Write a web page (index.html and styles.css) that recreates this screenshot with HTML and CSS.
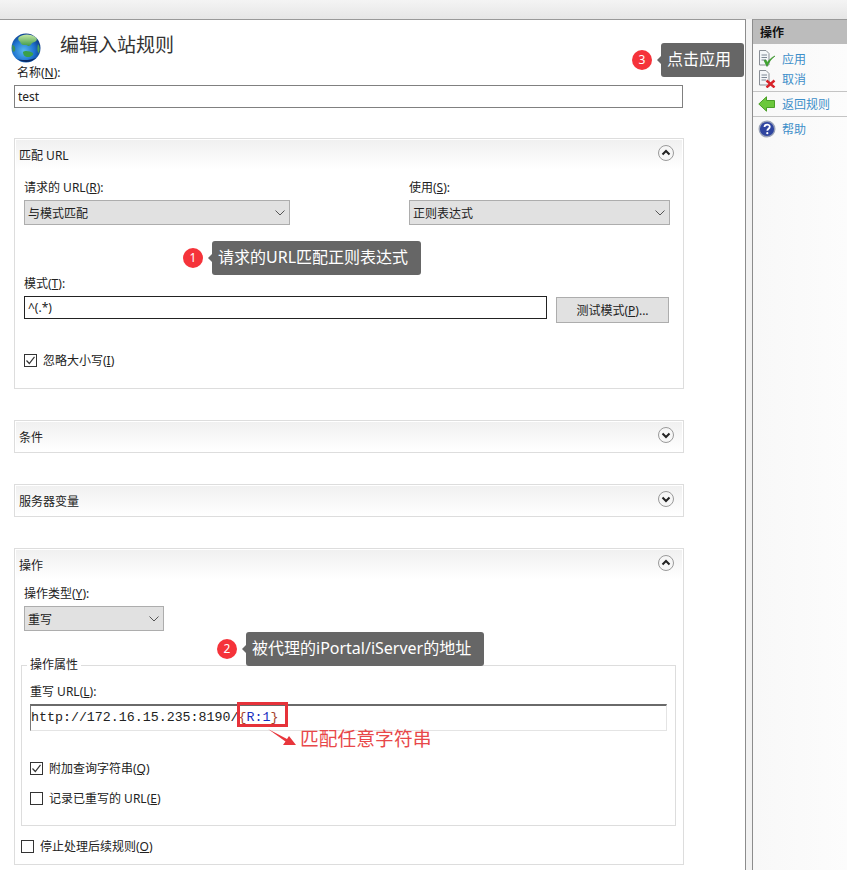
FILE: index.html
```html
<!DOCTYPE html>
<html lang="zh-CN">
<head>
  <meta charset="UTF-8" />
  <title>编辑入站规则</title>
  <link rel="stylesheet" href="styles.css">
</head>
<body>

  <div class="topbar"></div>

  <div class="window">

    <!-- Main form -->
    <div class="main">
      <div class="head">
        <svg class="globe" width="30" height="30" viewBox="0 0 30 30">
          <defs>
            <radialGradient id="sea" cx="0.42" cy="0.6" r="0.62">
              <stop offset="0" stop-color="#58b8f0" />
              <stop offset="0.6" stop-color="#1f74d0" />
              <stop offset="1" stop-color="#0c3a88" />
            </radialGradient>
            <linearGradient id="land" x1="0" y1="0" x2="0" y2="1">
              <stop offset="0" stop-color="#c6e8a4" />
              <stop offset="1" stop-color="#3f9a4c" />
            </linearGradient>
          </defs>
          <circle cx="15" cy="15" r="14.5" fill="url(#sea)" />
          <path d="M8 4C12 .6 20 .4 25 4.500C27 7 25 9 22 9.500C20 10.500 20 13 17 13C15 11 13 13 11 11.500C9 10.500 10 9 8 8C7 6.500 7 5 8 4Z" fill="url(#land)" />
          <path d="M12 19C14 17 19 18 22 20C23 22 20 24 17 24C14 24 12 22 12 19Z" fill="#3aa04a" />
          <path d="M1 12C3 12 5 14 4 18C3 19 2 19 1.500 18Z" fill="#3a8f5a" />
          <path d="M27 11C29 13 29 17 28 20C26 19 26 15 27 11Z" fill="#4ba25a" />
          <path d="M6 26C12 30 20 30 25 25C20 27 12 28 6 26Z" fill="#0a2c68" />
        </svg>
        <h1 class="title">编辑入站规则</h1>
      </div>

      <div class="form">
        <div class="label">名称(<u>N</u>):</div>
        <input class="textbox name-box" value="test" />

        <!-- 匹配 URL -->
        <div class="section first">
          <div class="section-head">
            <span>匹配 URL</span>
            <svg class="toggle" width="18" height="18" viewBox="0 0 18 18"><circle cx="9" cy="9" r="7.500" fill="#f6f6f6" stroke="#9a9a9a" /><path d="M5.500 10.500L9 7l3.500 3.500" fill="none" stroke="#222" stroke-width="2" /></svg>
          </div>
          <div class="section-body">
            <div class="two-col">
              <div class="col-left">
                <div class="label">请求的 URL(<u>R</u>):</div>
                <div class="select">与模式匹配<svg width="10" height="6" viewBox="0 0 10 6"><path d="M.500 .500L5 5l4.500-4.500" fill="none" stroke="#555" /></svg></div>
              </div>
              <div class="col-right">
                <div class="label">使用(<u>S</u>):</div>
                <div class="select">正则表达式<svg width="10" height="6" viewBox="0 0 10 6"><path d="M.500 .500L5 5l4.500-4.500" fill="none" stroke="#555" /></svg></div>
              </div>
            </div>
            <div class="label pattern-label">模式(<u>T</u>):</div>
            <div class="pattern-row">
              <input class="textbox pattern-box" value="^(.*)" />
              <button class="btn">测试模式(<u>P</u>)...</button>
            </div>
            <div class="check ignore-case">
              <span class="box"><svg width="11" height="11" viewBox="0 0 11 11"><path d="M1.500 5.500L4.300 8.500L9.500 1.800" fill="none" stroke="#333" stroke-width="1.200" /></svg></span>
              <span>忽略大小写(<u>I</u>)</span>
            </div>
          </div>
        </div>

        <!-- 条件 -->
        <div class="section collapsed">
          <div class="section-head">
            <span>条件</span>
            <svg class="toggle" width="18" height="18" viewBox="0 0 18 18"><circle cx="9" cy="9" r="7.500" fill="#f6f6f6" stroke="#9a9a9a" /><path d="M5.500 7.500L9 11l3.500-3.500" fill="none" stroke="#222" stroke-width="2" /></svg>
          </div>
        </div>

        <!-- 服务器变量 -->
        <div class="section collapsed">
          <div class="section-head">
            <span>服务器变量</span>
            <svg class="toggle" width="18" height="18" viewBox="0 0 18 18"><circle cx="9" cy="9" r="7.500" fill="#f6f6f6" stroke="#9a9a9a" /><path d="M5.500 7.500L9 11l3.500-3.500" fill="none" stroke="#222" stroke-width="2" /></svg>
          </div>
        </div>

        <!-- 操作 -->
        <div class="section">
          <div class="section-head">
            <span>操作</span>
            <svg class="toggle" width="18" height="18" viewBox="0 0 18 18"><circle cx="9" cy="9" r="7.500" fill="#f6f6f6" stroke="#9a9a9a" /><path d="M5.500 10.500L9 7l3.500 3.500" fill="none" stroke="#222" stroke-width="2" /></svg>
          </div>
          <div class="section-body action-body">
            <div class="label">操作类型(<u>Y</u>):</div>
            <div class="select small">重写<svg width="10" height="6" viewBox="0 0 10 6"><path d="M.500 .500L5 5l4.500-4.500" fill="none" stroke="#555" /></svg></div>

            <fieldset class="props">
              <legend>操作属性</legend>
              <div class="label">重写 URL(<u>L</u>):</div>
              <div class="url-box">http://172.16.15.235:8190/<span class="brace">{</span><span class="token">R:1</span><span class="brace">}</span></div>
              <div class="check append-query">
                <span class="box"><svg width="11" height="11" viewBox="0 0 11 11"><path d="M1.500 5.500L4.300 8.500L9.500 1.800" fill="none" stroke="#333" stroke-width="1.200" /></svg></span>
                <span>附加查询字符串(<u>Q</u>)</span>
              </div>
              <div class="check log-url">
                <span class="box"></span>
                <span>记录已重写的 URL(<u>E</u>)</span>
              </div>
            </fieldset>

            <div class="check stop-rule">
              <span class="box"></span>
              <span>停止处理后续规则(<u>O</u>)</span>
            </div>
          </div>
        </div>
      </div>
    </div>

    <!-- Actions panel -->
    <div class="side">
      <div class="side-head">操作</div>
      <div class="side-group">
        <div class="side-item">
          <svg width="18" height="18" viewBox="0 0 18 18"><path d="M1.500 .500H8L11 3.500V15H1.500Z" fill="#f4f6f8" stroke="#8a8f96" /><path d="M3.500 5H9M3.500 7.500H9M3.500 10H8" stroke="#7d8794" /><path d="M6 10.500L9 16.500C11 12 13 9 17 6C13.500 7.500 11 10 9.300 12.500L8 10Z" fill="#3fa82f" stroke="#2f8a22" stroke-width=".6" /></svg>
          <span>应用</span>
        </div>
        <div class="side-item">
          <svg width="18" height="18" viewBox="0 0 18 18"><path d="M1.500 .500H8L11 3.500V15H1.500Z" fill="#f4f6f8" stroke="#8a8f96" /><path d="M3.500 5H9M3.500 7.500H9M3.500 10H8" stroke="#7d8794" /><path d="M8.500 10.500L16.500 17.500M16.500 10.500L8.500 17.500" stroke="#d8232a" stroke-width="2.400" /></svg>
          <span>取消</span>
        </div>
      </div>
      <div class="side-group">
        <div class="side-item">
          <svg width="18" height="18" viewBox="0 0 18 18"><path d="M.800 9L8.500 1.800V5.500H16.500V12.500H8.500V16.200Z" fill="#6cc83c" stroke="#4a9e28" /></svg>
          <span>返回规则</span>
        </div>
      </div>
      <div class="side-group last">
        <div class="side-item">
          <svg width="18" height="18" viewBox="0 0 18 18"><circle cx="9" cy="9" r="7.800" fill="#2f45a0" stroke="#9aa3b8" stroke-width="1.400" /><path d="M6.500 7C6.500 3.800 11.800 3.800 11.800 6.800C11.800 8.800 9.300 8.800 9.300 10.800" fill="none" stroke="#fff" stroke-width="1.800" /><circle cx="9.300" cy="13.200" r="1.100" fill="#fff" /></svg>
          <span>帮助</span>
        </div>
      </div>
    </div>
  </div>

  <!-- Annotations on top of the screenshot -->
  <div class="note note-1"><span class="dot">1</span><span class="tip">请求的URL匹配正则表达式</span></div>
  <div class="note note-2"><span class="dot">2</span><span class="tip">被代理的iPortal/iServer的地址</span></div>
  <div class="note note-3"><span class="dot">3</span><span class="tip">点击应用</span></div>

  <div class="red-box"></div>
  <svg class="red-arrow" width="30" height="20" viewBox="0 0 30 20"><path d="M0 0L19 10L21 7L28 16L15 16L17.500 12.500Z" fill="#e8363c" /></svg>
  <div class="red-text">匹配任意字符串</div>

</body>
</html>
```

FILE: styles.css
```css
* {
  box-sizing: border-box;
}

body {
  margin: 0;
  width: 847px;
  height: 870px;
  overflow: hidden;
  position: relative;
  background: #f2f2f2;
  color: #222;
  font-family: "Noto Sans", "Noto Sans CJK SC", sans-serif;
  font-size: 12px;
}

.topbar {
  height: 19px;
  background: linear-gradient(to bottom, #f4f4f4, #e6e6e6);
}

.window {
  display: flex;
  height: 851px;
}

.main {
  width: 746px;
  background: #fff;
  border-top: 1px solid #999;
  border-right: 1px solid #8c8c8c;
}

.head {
  display: flex;
  height: 45px;
  padding: 13px 0 0 11px;
}

.globe {
  flex: none;
}

.title {
  margin: -1px 0 0 19px;
  font-size: 19px;
  font-weight: 400;
  line-height: 26px;
  color: #333;
}

.form {
  width: 670px;
  margin-left: 14px;
}

.label {
  height: 16px;
  line-height: 16px;
  white-space: nowrap;
}

.form > .label {
  padding-left: 3px;
}

.textbox {
  display: block;
  margin: 4px 0 0;
  padding: 0 3px;
  height: 23px;
  font: inherit;
  color: #222;
  background: #fff;
  border: 1px solid #808080;
  border-radius: 0;
  outline: none;
}

.name-box {
  width: 669px;
}

.section {
  margin-top: 31px;
  padding: 1px;
  border: 1px solid #ddd;
}

.section.first {
  margin-top: 30px;
}

.section.collapsed {
  height: 33px;
}

.section-head {
  display: flex;
  align-items: center;
  justify-content: space-between;
  height: 30px;
  padding: 0 7px 0 3px;
  background: linear-gradient(to bottom, #f0f0f0, #fff);
}

.toggle {
  margin-top: -5px;
}

.section-body {
  padding: 10px 12px 19px 8px;
}

.two-col {
  display: flex;
  justify-content: space-between;
}

.col-left {
  width: 266px;
}

.col-right {
  width: 261px;
}

.select {
  display: flex;
  align-items: center;
  justify-content: space-between;
  height: 25px;
  margin-top: 4px;
  padding: 0 4px 0 3px;
  background: #e1e1e1;
  border: 1px solid #adadad;
}

.select.small {
  width: 140px;
}

.pattern-label {
  margin-top: 51px;
}

.pattern-row {
  display: flex;
  align-items: flex-start;
  gap: 9px;
  height: 27px;
  margin-top: 4px;
}

.pattern-box {
  width: 523px;
  margin: 0;
  border-color: #222;
}

.btn {
  width: 113px;
  height: 26px;
  margin-top: 1px;
  padding: 0;
  font: inherit;
  color: #222;
  background: #e1e1e1;
  border: 1px solid #adadad;
  border-radius: 0;
}

.check {
  display: flex;
  align-items: center;
  gap: 6px;
  height: 16px;
}

.box {
  display: flex;
  align-items: center;
  justify-content: center;
  flex: none;
  width: 13px;
  height: 13px;
  background: #fff;
  border: 1px solid #333;
}

.ignore-case {
  margin-top: 29px;
}

.section-body.action-body {
  padding: 6px 12px 9px 8px;
}

.props {
  min-width: 0;
  width: 655px;
  margin: 26px 0 0 -3px;
  padding: 11px 8px 19px;
  border: 1px solid #ddd;
}

.props legend {
  height: 16px;
  margin-left: -3px;
  padding: 0 3px;
  line-height: 16px;
}

.url-box {
  width: 637px;
  height: 27px;
  margin-top: 4px;
  padding: 4px 0 0;
  font-family: "Liberation Mono", monospace;
  font-size: 13.300px;
  line-height: 16px;
  color: #222;
  border-top: 2px solid #6a6a6a;
  border-left: 1px solid #777;
  border-right: 1px solid #e4e4e4;
  border-bottom: 1px solid #e4e4e4;
}

.brace {
  color: #a5432e;
}

.token {
  color: #1a2fc0;
}

.append-query {
  margin-top: 29px;
}

.log-url {
  margin-top: 14px;
}

.stop-rule {
  margin-top: 12px;
  margin-left: -3px;
}

/* Right panel */
.side {
  flex: 1;
  margin-left: 6px;
  background: linear-gradient(to right, #f8f8f8, #fcfcfc);
  border-top: 1px solid #999;
  border-left: 1px solid #8c8c8c;
}

.side-head {
  height: 24px;
  padding-left: 7px;
  line-height: 25px;
  font-weight: 700;
  color: #111;
  background: #bcbcbc;
}

.side-group {
  padding: 2px 0 2px 5px;
  border-bottom: 1px solid #c4c4c4;
}

.side-head + .side-group {
  padding-top: 5px;
}

.side-group.last {
  border-bottom: none;
}

.side-item {
  display: flex;
  align-items: center;
  gap: 6px;
  height: 20px;
  color: #3d8fc9;
}

/* Annotations */
.note {
  position: absolute;
  display: flex;
  align-items: center;
  height: 34px;
}

.note-1 {
  left: 183px;
  top: 241px;
}

.note-2 {
  left: 217px;
  top: 632px;
}

.note-3 {
  left: 632px;
  top: 43px;
}

.dot {
  flex: none;
  width: 20px;
  height: 20px;
  margin-right: 9px;
  border-radius: 50%;
  text-align: center;
  line-height: 20px;
  font-size: 12px;
  color: #fff;
  background: #f5333a;
}

.tip {
  position: relative;
  height: 34px;
  padding: 0 13px 0 6px;
  font-size: 16px;
  line-height: 33px;
  white-space: nowrap;
  color: #fff;
  background: #666;
  border-radius: 3px;
}

.tip::before {
  content: "";
  position: absolute;
  left: -4px;
  top: 13px;
  border-top: 4px solid transparent;
  border-bottom: 4px solid transparent;
  border-right: 4px solid #666;
}

.red-box {
  position: absolute;
  left: 237px;
  top: 702px;
  width: 51px;
  height: 25px;
  border: 3px solid #e6323a;
}

.red-arrow {
  position: absolute;
  left: 268px;
  top: 729px;
}

.red-text {
  position: absolute;
  left: 300px;
  top: 725px;
  font-size: 18.800px;
  line-height: 28px;
  color: #e8484a;
}
```
